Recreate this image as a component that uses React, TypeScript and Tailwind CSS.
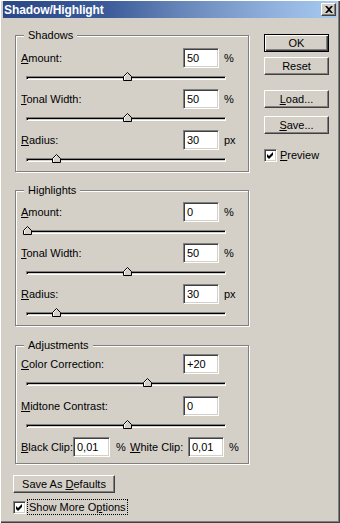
import React from 'react';

const Mn = ({ text, u }: { text: string; u: number }) => (
  <>
    {text.slice(0, u)}
    <span className="underline underline-offset-[1px]">{text[u]}</span>
    {text.slice(u + 1)}
  </>
);

const Field = ({ value, wide }: { value: string; wide?: boolean }) => (
  <div
    className={`${wide ? 'w-[37px]' : 'w-[36px]'} h-[20px] shrink-0 bg-white border border-t-[#808080] border-l-[#808080] border-r-white border-b-white shadow-[inset_1px_1px_0_#404040,inset_-1px_-1px_0_#d4d0c8] pl-[3px] leading-[18px]`}
  >
    {value}
  </div>
);

const Row = ({ label, u, value, unit }: { label: string; u: number; value: string; unit?: string }) => (
  <div className="flex items-center h-[20px]">
    <span className="w-[167px] pl-[5px]">
      <Mn text={label} u={u} />
    </span>
    <Field value={value} />
    {unit && <span className="ml-[5px]">{unit}</span>}
  </div>
);

const Slider = ({ pos, tall }: { pos: number; tall?: boolean }) => (
  <div className={`relative ml-[10px] w-[200px] ${tall ? 'h-[22px]' : 'h-[21px]'}`}>
    <div className="absolute left-0 right-0 top-[8px] h-[4px] border border-t-[#808080] border-l-[#808080] border-b-white border-r-white shadow-[inset_1px_1px_0_#000,inset_-1px_-1px_0_#d4d0c8]" />
    <svg className="absolute top-[4px]" style={{ left: pos - 4 }} width="9" height="9" viewBox="0 0 9 9">
      <path d="M0.5 8.5 V4.5 L4.5 0.5 L8.5 4.5 V8.5 Z" fill="#d4d0c8" />
      <path d="M1.5 8 V4.5 L4.5 1.5" stroke="#fff" fill="none" />
      <path d="M4.5 0.5 L8.5 4.5 V8.5 H0.5 V4.5 Z" stroke="#000" fill="none" />
    </svg>
  </div>
);

const Group = ({ title, className, children }: { title: string; className: string; children: React.ReactNode }) => (
  <div className={`relative border border-[#808080] shadow-[1px_1px_0_#fff,inset_1px_1px_0_#fff] ${className}`}>
    <span className="absolute -top-[8px] left-[8px] px-[4px] bg-[#d4d0c8] leading-[14px]">{title}</span>
    {children}
  </div>
);

const Btn = ({ children, className, def }: { children: React.ReactNode; className?: string; def?: boolean }) => (
  <div
    className={`h-[18px] flex items-center justify-center border ${
      def
        ? 'border-black shadow-[inset_1px_1px_0_#fff,inset_-1px_-1px_0_#404040,inset_-2px_-2px_0_#808080]'
        : 'border-t-white border-l-white border-r-[#404040] border-b-[#404040] shadow-[inset_-1px_-1px_0_#808080]'
    } ${className ?? ''}`}
  >
    {children}
  </div>
);

const Check = () => (
  <div className="w-[13px] h-[13px] shrink-0 bg-white border border-t-[#808080] border-l-[#808080] border-r-white border-b-white shadow-[inset_1px_1px_0_#404040,inset_-1px_-1px_0_#d4d0c8] flex items-center justify-center">
    <svg width="7" height="7" viewBox="0 0 7 7">
      <path d="M0 2 L2 4 L6 0 V3 L2 7 L0 5 Z" fill="#000" />
    </svg>
  </div>
);

export default function App() {
  return (
    <div className="w-[340px] h-[523px] bg-[#d4d0c8] overflow-hidden text-black text-[11px] font-['Liberation_Sans',Arial,sans-serif] shadow-[inset_1px_1px_0_#fff,inset_-1px_-1px_0_#404040,inset_-2px_-2px_0_#808080]">
      {/* title bar */}
      <div className="ml-[3px] mt-[1px] w-[334px] h-[17px] flex items-center justify-between bg-[linear-gradient(90deg,#2a4788_0%,#3a5a98_30%,#6a89bb_55%,#8fb0dc_80%,#a6caf0_100%)]">
        <span className="pl-[1px] text-white font-bold text-[12px] tracking-[-0.1px]">Shadow/Highlight</span>
        <div className="mr-[1px] w-[15px] h-[13px] flex items-center justify-center bg-[#d4d0c8] border border-t-white border-l-white border-r-[#404040] border-b-[#404040] shadow-[inset_-1px_-1px_0_#808080]">
          <svg width="8" height="7" viewBox="0 0 8 7">
            <path d="M0 0 H2 L4 2 L6 0 H8 L5 3.5 L8 7 H6 L4 5 L2 7 H0 L3 3.5 Z" fill="#000" />
          </svg>
        </div>
      </div>

      <div className="flex">
        {/* left column */}
        <div className="ml-[15px] w-[234px] mt-[17px]">
          <Group title="Shadows" className="pt-[12px]">
            <Row label="Amount:" u={0} value="50" unit="%" />
            <Slider pos={101} />
            <Row label="Tonal Width:" u={0} value="50" unit="%" />
            <Slider pos={101} />
            <Row label="Radius:" u={0} value="30" unit="px" />
            <Slider pos={30} />
          </Group>

          <Group title="Highlights" className="mt-[18px] pt-[11px]">
            <Row label="Amount:" u={0} value="0" unit="%" />
            <Slider pos={1} />
            <Row label="Tonal Width:" u={0} value="50" unit="%" />
            <Slider pos={101} />
            <Row label="Radius:" u={0} value="30" unit="px" />
            <Slider pos={30} />
          </Group>

          <Group title="Adjustments" className="mt-[19px] pt-[8px] pb-[6px]">
            <Row label="Color Correction:" u={0} value="+20" />
            <Slider pos={121} tall />
            <Row label="Midtone Contrast:" u={0} value="0" />
            <Slider pos={101} />
            <div className="flex items-center h-[20px]">
              <span className="w-[57px] pl-[5px]">
                <Mn text="Black Clip:" u={0} />
              </span>
              <Field value="0,01" wide />
              <span className="ml-[6px] w-[14px]">%</span>
              <span className="w-[58px]">
                <Mn text="White Clip:" u={0} />
              </span>
              <Field value="0,01" />
              <span className="ml-[5px]">%</span>
            </div>
          </Group>

          <Btn className="-ml-[2px] mt-[11px] w-[102px]">
            <span>
              Save As <Mn text="Defaults" u={0} />
            </span>
          </Btn>

          <div className="-ml-[2px] mt-[7px] flex items-center">
            <Check />
            <span className="ml-[2px] px-[1px] leading-[14px] outline outline-1 outline-dotted outline-black">
              Show More O<span className="underline underline-offset-[1px]">p</span>tions
            </span>
          </div>
        </div>

        {/* right column */}
        <div className="ml-[15px] w-[65px] mt-[16px]">
          <Btn def>OK</Btn>
          <Btn className="mt-[5px]">Reset</Btn>
          <Btn className="mt-[15px]">
            <span>
              <Mn text="Load..." u={0} />
            </span>
          </Btn>
          <Btn className="mt-[8px]">
            <span>
              <Mn text="Save..." u={0} />
            </span>
          </Btn>
          <div className="mt-[13px] flex items-center">
            <Check />
            <span className="ml-[3px]">
              <Mn text="Preview" u={0} />
            </span>
          </div>
        </div>
      </div>
    </div>
  );
}
